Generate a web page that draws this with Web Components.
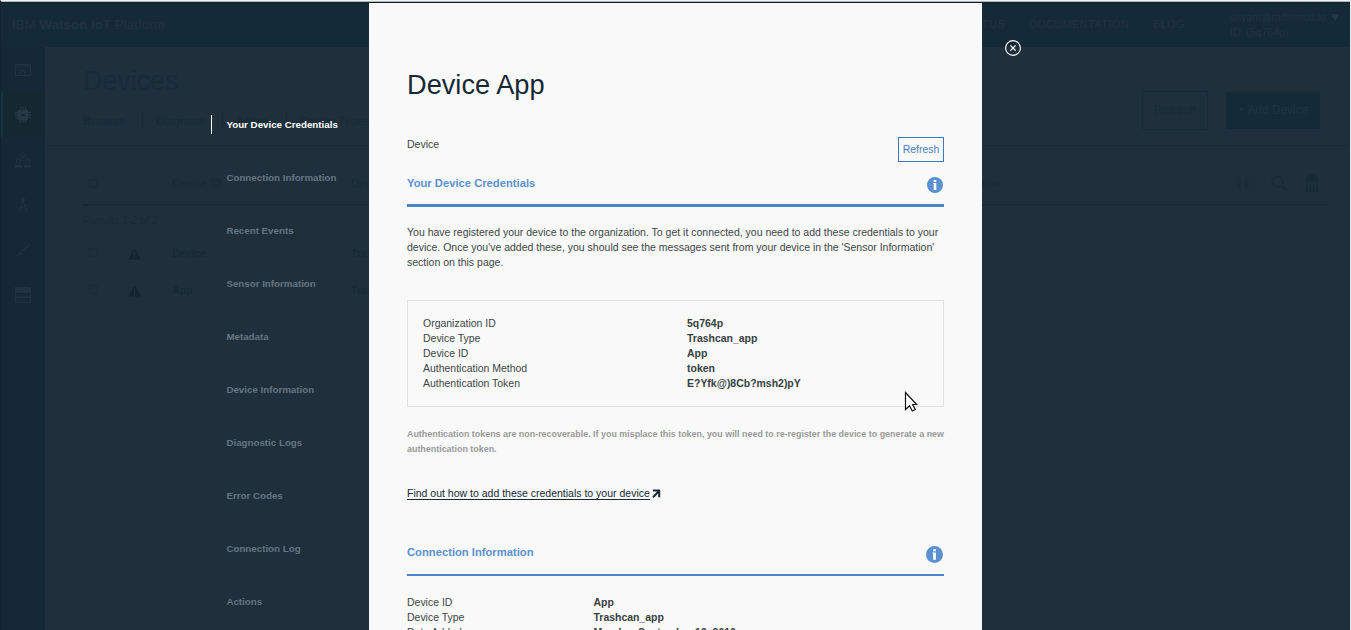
<!DOCTYPE html>
<html lang="en">
<head>
<meta charset="utf-8">
<title>Device App</title>
<style>
html,body{margin:0;height:100%;overflow:hidden}
body{font-family:"Liberation Sans",Arial,sans-serif;background:#1f2f3b}
</style>
</head>
<body>
<iot-app></iot-app>
<script>
const define = (name, html) => {
  const t = document.createElement('template');
  t.innerHTML = html;
  customElements.define(name, class extends HTMLElement {
    constructor() {
      super();
      this.attachShadow({mode: 'open'}).appendChild(t.content.cloneNode(true));
    }
  });
};

define('app-header', `
<style>
:host{display:flex;height:44px;box-sizing:border-box;background:#152a37;color:#21323f;padding:0 12px 0 11px;align-items:center}
.brand{font-size:13.200px;letter-spacing:.1px;flex:1;padding-bottom:1px}
nav{display:flex;gap:23.500px;font-size:10.500px;letter-spacing:.72px;margin-right:45px;padding-bottom:2px}
.user{width:108px;font-size:10.5px;line-height:15px;padding-top:0;margin-top:-1px;white-space:nowrap;display:grid;grid-template-columns:101px auto}
svg{margin-top:4px;display:block}
</style>
<div class="brand">IBM <b>Watson IoT</b> Platform</div>
<nav><span>STATUS</span><span>DOCUMENTATION</span><span>BLOG</span></nav>
<div class="user"><span>shyam@radiostud.io</span><svg width="8" height="7"><path d="M0 0h8L4 7z" fill="#263743"/></svg><span>ID: (5q764p)</span></div>`);

define('side-nav', `
<style>
:host{display:flex;flex-direction:column;width:44px;background:#152836}
div{height:45px;display:grid;place-items:center;box-sizing:border-box;padding-right:1px}
.on{background:#152730;border-left:2px solid #163341;padding-right:3px}
svg{display:block;fill:none;stroke:#20333f}
</style>
<div><svg width="16" height="12"><path d="M.5.5h15v11H.5zM1 2h14M4.500 9.500a3.500 3.500 0 1 1 7 0M8 5v3M6.500 10V7.500M9.500 10V7.500"/></svg></div>
<div class="on"><svg width="16" height="16"><path fill="#263843" stroke="none" d="M3 3h10v10H3z"/><path stroke="#263843" stroke-width="1.300" d="M5.500 0v16M8 0v4M8 12v4M10.500 0v16M0 5.500h16M0 8h4M12 8h4M0 10.500h16"/><circle cx="8" cy="8" r="1.600" fill="#12262f" stroke="none"/></svg></div>
<div><svg width="16" height="16"><circle cx="8" cy="3" r="2.200"/><circle cx="3.500" cy="9" r="2.200"/><circle cx="12.500" cy="9" r="2.200"/><path stroke-width="2.500" d="M0 14.200h7M9 14.200h7"/></svg></div>
<div><svg width="12" height="16"><circle cx="6" cy="3" r="1.600" fill="#20333f"/><path d="M6 0v3M6 4 2 15M6 4l4 11M2 10q5 2 8-2"/></svg></div>
<div><svg width="14" height="14"><path d="m0 12 2 1 1-3 2 1 1-5 2 2 1-4 2 1 1-3 2-1"/></svg></div>
<div><svg width="16" height="16"><path fill="#20333f" stroke="none" fill-rule="evenodd" d="M0 0h16v16H0zM1 6v3.500h14V6zM1 11v4h14v-4z"/><path d="M2 7.500h12M2 13h12" stroke="#1a2d39"/></svg></div>`);

define('device-row', `
<style>
:host{display:grid;grid-template-columns:45px 44px 179px auto;height:37px;align-items:center;color:#192a37;font-weight:bold;font-size:10.7px}
i{width:7px;height:7px;border:1px solid #1c2b36;border-radius:2px;margin-left:6px}
svg{display:block;margin-top:3px}
</style>
<i></i><svg width="14" height="12"><path d="M6.500 0 13 11.500H0z" fill="#142430"/><path d="M6.500 3.500v4M6.500 8.500v1.500" stroke="#22333f" stroke-width="1.300"/></svg><slot name="id"></slot><slot name="type"></slot>`);

define('devices-page', `
<style>
:host{display:block;background:#1f2f3b;color:#192b38;min-width:0;overflow:hidden;font-size:10.7px}
.top{display:flex;height:99px;box-sizing:border-box;padding:0 30px 0 38px;border-bottom:1px solid #1c2c37}
.lead{flex:1}
h1{margin:18px 0 0;font:400 26.800px/32px "Liberation Sans",Arial,sans-serif;color:#172c3a}
.tabs{display:flex;gap:14px;align-items:center;margin-top:16px;height:14px;font-size:11.650px;white-space:nowrap}
.tabs i{width:1px;height:14px;background:#182a37;margin:0 -1px 0 3px}
.btn{box-sizing:border-box;width:66px;height:39px;border:1px solid #182b38;line-height:37px;text-align:center;margin:44px 18px 0 0;font-size:12px}
.add{background:#142a39;color:#1e3340;width:94px;height:37px;line-height:37px;margin:45px 0 0;border:0;font-size:11.900px}
.head{display:grid;grid-template-columns:89px 179px 566px 83px 236px 35px 35px auto;align-items:center;height:60px;box-sizing:border-box;padding-top:16px;margin:0 21px 0 38px;border-bottom:2px solid #1a2a35;white-space:nowrap;font-size:11.300px}
.head>i{width:7px;height:7px;border:1px solid #1b2b36;border-radius:2px;margin-left:6px}
.res{font-style:italic;margin:8px 0 0 38px;height:20px;color:#1b2b36}
device-row{margin-left:38px}
svg{display:block}
</style>
<div class="top"><div class="lead"><h1>Devices</h1><div class="tabs"><b>Browse</b><i></i><span>Diagnose</span><i></i><span>Action</span><i></i><span>Device Types</span></div></div>
<div class="btn">Refresh</div><div class="btn add">+ Add Device</div></div>
<div class="head"><i></i><span>Device ID</span><span>Device Type</span><span style="justify-self:end">Location</span><span></span>
<svg width="20" height="14"><path d="M1 1h4v12H1zM8 1h4v12H8z" fill="#1c2d38"/><path d="M14.500 1.500h4v11h-4z" fill="none" stroke="#1c2d38"/></svg>
<svg width="18" height="17" fill="none" stroke="#1c2c37"><circle cx="6.500" cy="6.500" r="5.300" stroke-width="1.500"/><path d="m10.500 10.500 6 5.500" stroke-width="3"/></svg>
<svg width="12" height="17"><path d="M0 1.500h3V0h6v1.500h3V5H0zM0 5h12v12H0z" fill="#182a35"/><path d="M2.500 6v9.500M6 6v9.500M9.500 6v9.500" stroke="#21323e"/></svg></div>
<div class="res">Results 1-2 of 2</div>
<device-row><span slot="id">Device</span><span slot="type">Trashcan</span></device-row>
<device-row><span slot="id">App</span><span slot="type">Trashcan_app</span></device-row>`);

define('section-link', `
<style>
:host{display:flex;align-items:center;height:19px;margin-bottom:34px;padding-left:15.400px;color:#667684;font-weight:bold;font-size:9.750px;white-space:nowrap;box-sizing:border-box}
:host([active]){border-left:1px solid #fff;padding-left:14.400px;color:#fff}
</style><slot></slot>`);

define('info-section', `
<style>
:host{display:block}
header{display:flex;justify-content:space-between;height:var(--head,31px);border-bottom:var(--rule,3px) solid #4a84c7;box-sizing:border-box}
h2{margin:0;font:bold 11.230px/15px "Liberation Sans",Arial,sans-serif;color:#5b92d1}
svg{display:block;width:var(--w,16px);height:var(--w,16px);margin:1px 1px 0 0}
</style>
<header><h2><slot name="title"></slot></h2><svg viewBox="0 0 16 16"><circle cx="8" cy="8" r="8" fill="#5a90cf"/><path d="M6.700 3h2.600v2H6.700zM6.200 6h3.100v7H6.700V7h-.5z" fill="#fff"/></svg></header>
<slot></slot>`);

define('field-row', `
<style>
:host{display:grid;grid-template-columns:var(--label,264px) auto;line-height:15px;font-size:10.480px;color:#3c4646}
b{color:#36413f}
</style><span><slot name="label"></slot></span><b><slot></slot></b>`);

define('device-modal', `
<style>
:host{display:block;box-sizing:border-box;width:613px;background:#f9f9f9;padding:64px 38px 0;color:#3c4646;font-size:10.510px;line-height:15px;overflow:hidden}
h1{margin:0;font:400 27.200px/36px "Liberation Sans",Arial,sans-serif;color:#152935}
.bar{display:flex;justify-content:space-between;height:39px;margin-top:34px;white-space:nowrap}
button{font:10.450px/23px "Liberation Sans",Arial,sans-serif;color:#4a7fc0;border:1px solid #4178be;background:none;height:25px;width:46px;padding:0;box-sizing:border-box}
p{margin:18px 0 0;white-space:nowrap}
.box{border:1px solid #e0e0e0;height:107px;box-sizing:border-box;padding:15px 15px 0;margin-top:30px}
.note{color:#999;font-weight:bold;font-size:8.920px;margin-top:20px}
.more{display:flex;margin:29px 0 44px;gap:2px;height:15px}
a{color:#152935;border-bottom:1px solid #152935;line-height:14px;height:13px;white-space:nowrap}
.rows{--label:186.500px;padding-top:19px;white-space:nowrap}
svg{display:block}
</style>
<h1>Device App</h1>
<div class="bar"><span>Device</span><button>Refresh</button></div>
<info-section><span slot="title">Your Device Credentials</span>
<p>You have registered your device to the organization. To get it connected, you need to add these credentials to your<br>device. Once you've added these, you should see the messages sent from your device in the 'Sensor Information'<br>section on this page.</p>
<div class="box">
<field-row><span slot="label">Organization ID</span>5q764p</field-row>
<field-row><span slot="label">Device Type</span>Trashcan_app</field-row>
<field-row><span slot="label">Device ID</span>App</field-row>
<field-row><span slot="label">Authentication Method</span>token</field-row>
<field-row><span slot="label">Authentication Token</span>E?Yfk@)8Cb?msh2)pY</field-row>
</div>
<p class="note">Authentication tokens are non-recoverable. If you misplace this token, you will need to re-register the device to generate a new<br>authentication token.</p>
<div class="more"><a>Find out how to add these credentials to your device</a><svg width="9" height="15"><path d="M1 4.500h6.200v6.700M7 5 1 11.200" fill="none" stroke="#152935" stroke-width="2"/></svg></div>
</info-section>
<info-section style="--rule:2px;--w:17px"><span slot="title">Connection Information</span>
<div class="rows">
<field-row><span slot="label">Device ID</span>App</field-row>
<field-row><span slot="label">Device Type</span>Trashcan_app</field-row>
<field-row><span slot="label">Date Added</span>Monday, September 19, 2016</field-row>
</div></info-section>`);

define('iot-app', `
<style>
:host{display:grid;grid-template:630px/1351px;overflow:hidden}
.page,.overlay{grid-area:1/1;box-sizing:border-box;height:630px}
.page{display:grid;grid-template:44px 583px/44px 1305px;border-top:1px solid #f2f2f2;border-left:1px solid #11242f;border-right:1px solid #e8eaeb;padding-top:2px;background:linear-gradient(#b5bbbb 0 1px,#0f202b 1px 2px,#1f2f3b 2px)}
app-header{grid-column:1/3}
.overlay{display:grid;grid-template-columns:211px 158px 613px 23px 16px;padding-top:3px;position:relative}
nav{grid-column:2;padding-top:112px;width:150px}
.close{grid-column:5;margin-top:37px;display:block}
.cursor{position:absolute;left:904px;top:391px}
</style>
<div class="page"><app-header></app-header><side-nav></side-nav><devices-page></devices-page></div>
<div class="overlay">
<nav><section-link active>Your Device Credentials</section-link><section-link>Connection Information</section-link><section-link>Recent Events</section-link><section-link>Sensor Information</section-link><section-link>Metadata</section-link><section-link>Device Information</section-link><section-link>Diagnostic Logs</section-link><section-link>Error Codes</section-link><section-link>Connection Log</section-link><section-link>Actions</section-link></nav>
<device-modal></device-modal>
<svg class="close" width="16" height="16" viewBox="0 0 16 16" fill="none" stroke="#fff"><circle cx="8" cy="8" r="7.400" stroke-width="1.100"/><path d="m5.400 5.400 5.200 5.200M10.600 5.400l-5.200 5.200" stroke-width="1.300"/></svg>
<svg class="cursor" width="14" height="22"><path d="M1.500 1.500v17l4-3.800 2.800 5.300 3-1.500-2.700-5h4z" fill="#fff" stroke="#111" stroke-width="1.200"/></svg>
</div>`);
</script>
</body>
</html>
